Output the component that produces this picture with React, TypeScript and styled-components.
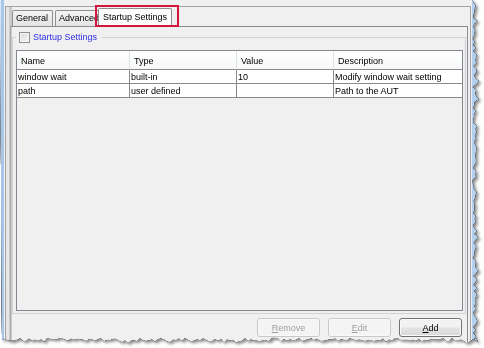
import React, { useMemo } from "react";
import styled, { createGlobalStyle } from "styled-components";

const GlobalStyle = createGlobalStyle`
  html, body { margin: 0; padding: 0; background: #fff; }
  body { font-family: "Liberation Sans", Arial, sans-serif; font-size: 9px; color: #000; }
`;

const Page = styled.div`
  width: 484px;
  height: 348px;
  overflow: hidden;
  background: #fff;
`;

const Shadow = styled.div`
  width: 484px;
  height: 348px;
  filter: drop-shadow(0 0 0.6px #202020) drop-shadow(0 0 0.4px #202020)
    drop-shadow(2px 2px 1.5px rgba(0, 0, 0, 0.45));
`;

const Frame = styled.div<{ $clip: string }>`
  width: 482px;
  height: 346px;
  display: flex;
  background: #b3d0ee;
  clip-path: ${(p) => p.$clip};
`;

const LeftEdge = styled.div`
  width: 4px;
  background: linear-gradient(to right, #dcebf9 0 1px, #a8c7e8 1px 4px);
`;

const Client = styled.div`
  width: 468px;
  box-sizing: border-box;
  display: flex;
  flex-direction: column;
  padding: 6px 1px 0 1px;
  background: #f0f0f0;
`;

const OuterPanel = styled.div`
  flex: 1;
  display: flex;
  flex-direction: column;
  border: 1px solid #a3a3a3;
  border-bottom: none;
  padding-left: 6px;
  background: linear-gradient(to right, #e6e6e6 0 3px, #cbcbcb 3px 6px, #f0f0f0 6px);
`;

const TabStrip = styled.div`
  height: 19px;
  display: flex;
  align-items: flex-end;
`;

const Tab = styled.div<{ $active?: boolean }>`
  position: relative;
  box-sizing: border-box;
  height: ${(p) => (p.$active ? "19px" : "16px")};
  margin-bottom: ${(p) => (p.$active ? "-1px" : "0")};
  margin-left: ${(p) => (p.$active ? "-4px" : "2px")};
  padding: ${(p) => (p.$active ? "3px 4px 0 4px" : "2px 2px 0 3px")};
  border: 1px solid #8e8f8f;
  border-bottom: none;
  border-radius: 2px 2px 0 0;
  background: ${(p) =>
    p.$active ? "#fcfcfc" : "linear-gradient(#f3f3f3, #e4e4e4)"};
  z-index: ${(p) => (p.$active ? 2 : 1)};
  white-space: nowrap;
  &:first-child { margin-left: 0; padding-right: 4px; }
`;

const Highlight = styled.div`
  position: absolute;
  left: -4px;
  top: -4px;
  right: -8px;
  bottom: 0;
  border: 2px solid #d4163e;
  pointer-events: none;
`;

const TabPanel = styled.div`
  flex: 1;
  display: flex;
  flex-direction: column;
  margin: 0 2px 0 -2px;
  border-top: 1px solid #898c95;
  border-left: 1px solid #a9a9a9;
  border-right: 1px solid #898c95;
`;

const Group = styled.fieldset`
  margin: 4px 1px 0 1px;
  padding: 7px 2px 2px 3px;
  border: 1px solid #cfd3d6;
  min-width: 0;
`;

const Legend = styled.legend`
  display: flex;
  align-items: center;
  gap: 3px;
  height: 12px;
  padding: 0 5px 0 3px;
  color: #2f2fe6;
`;

const CheckBox = styled.span`
  width: 11px;
  height: 11px;
  box-sizing: border-box;
  border: 1px solid #8e8f8f;
  background: linear-gradient(135deg, #d8d8d8, #f7f7f7);
  box-shadow: inset 0 0 0 1px #f4f4f4;
`;

const Table = styled.div`
  height: 261px;
  box-sizing: border-box;
  border: 1px solid #828790;
  background: #f0f0f0;
`;

const Grid = styled.div`
  display: grid;
  grid-template-columns: 113px 107px 97px 1fr;
`;

const HeadCell = styled.div`
  height: 19px;
  box-sizing: border-box;
  padding: 5px 0 0 4px;
  background: linear-gradient(#ffffff, #f7f8f9);
  border-right: 1px solid #dfe2e5;
  border-bottom: 1px solid #8a8a8a;
  &:nth-child(4) { border-right: none; }
`;

const Cell = styled.div`
  height: 14px;
  box-sizing: border-box;
  padding: 2px 0 0 1px;
  background: #fff;
  border-right: 1px solid #8a8a8a;
  border-bottom: 1px solid #8a8a8a;
  white-space: nowrap;
  overflow: hidden;
  &:nth-child(4n) { border-right: none; }
`;

const ButtonRow = styled.div`
  display: flex;
  justify-content: flex-end;
  gap: 8px;
  margin-top: 4px;
  padding-right: 5px;
`;

const Button = styled.button<{ $disabled?: boolean }>`
  width: 63px;
  height: 19px;
  padding: 0;
  font: inherit;
  border-radius: 3px;
  border: 1px solid ${(p) => (p.$disabled ? "#c9c9c9" : "#707070")};
  background: ${(p) =>
    p.$disabled ? "#f4f4f4" : "linear-gradient(#f2f2f2 0 45%, #e3e3e3 55%, #d9d9d9)"};
  color: ${(p) => (p.$disabled ? "#a0a0a0" : "#000")};
  box-shadow: inset 0 0 0 1px ${(p) => (p.$disabled ? "#f8f8f8" : "#fbfbfb")};
  u { text-decoration: underline; }
`;

const columns = ["Name", "Type", "Value", "Description"];
const rows = [
  ["window wait", "built-in", "10", "Modify window wait setting"],
  ["path", "user defined", "", "Path to the AUT"],
];

function tornClip() {
  let s = 11;
  const r = () => {
    s = (s * 16807) % 2147483647;
    return s / 2147483647;
  };
  const pts: string[] = ["0px 0px"];
  for (let y = 0; y <= 339; y += 3) {
    const x = 472.5 + r() * 4 + (r() > 0.82 ? 2.5 : 0);
    pts.push(`${x.toFixed(1)}px ${y}px`);
  }
  pts.push("478px 342px");
  for (let x = 476; x >= 0; x -= 3) {
    const y = 337.5 + r() * 3.5 + (r() > 0.85 ? 2 : 0);
    pts.push(`${x}px ${y.toFixed(1)}px`);
  }
  return `polygon(${pts.join(",")})`;
}

export default function App() {
  const clip = useMemo(tornClip, []);
  return (
    <Page>
      <GlobalStyle />
      <Shadow>
        <Frame $clip={clip}>
          <LeftEdge />
          <Client>
            <OuterPanel>
              <TabStrip>
                <Tab>General</Tab>
                <Tab>Advanced</Tab>
                <Tab $active>
                  Startup Settings
                  <Highlight />
                </Tab>
              </TabStrip>
              <TabPanel>
                <Group>
                  <Legend>
                    <CheckBox />
                    Startup Settings
                  </Legend>
                  <Table>
                    <Grid>
                      {columns.map((c) => (
                        <HeadCell key={c}>{c}</HeadCell>
                      ))}
                      {rows.map((row, i) =>
                        row.map((v, j) => <Cell key={`${i}-${j}`}>{v}</Cell>)
                      )}
                    </Grid>
                  </Table>
                </Group>
                <ButtonRow>
                  <Button $disabled>
                    <u>R</u>emove
                  </Button>
                  <Button $disabled>
                    <u>E</u>dit
                  </Button>
                  <Button>
                    <u>A</u>dd
                  </Button>
                </ButtonRow>
              </TabPanel>
            </OuterPanel>
          </Client>
        </Frame>
      </Shadow>
    </Page>
  );
}
